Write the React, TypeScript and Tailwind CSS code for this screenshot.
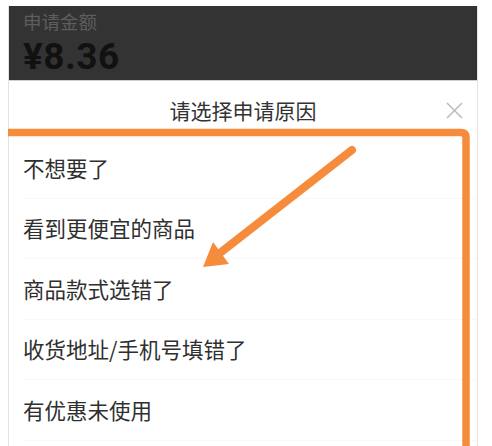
import React from "react";

const reasons = [
  "不想要了",
  "看到更便宜的商品",
  "商品款式选错了",
  "收货地址/手机号填错了",
  "有优惠未使用",
];

export default function App() {
  return (
    <div
      className="relative w-[492px] h-[446px] overflow-hidden bg-white pt-[6px] pl-[8px]"
      style={{ fontFamily: '"Noto Sans CJK SC", "Noto Sans", sans-serif' }}
    >
      <div className="w-[470px] h-[440px] border-x border-[#e3e3e3] flex flex-col">
        <div className="h-[75px] bg-[#333333] border-b border-[#cfcfcf] px-[14px] flex flex-col">
          <div className="mt-[4px] h-[22px] leading-[22px] text-[18.5px] text-[#5e5e5e]">申请金额</div>
          <div
            className="mt-[4px] h-[42px] leading-[42px] text-[37px] font-bold text-[#111111] tracking-[0.5px]"
            style={{ fontFamily: 'Roboto, "Noto Sans CJK SC", sans-serif' }}
          >
            ¥8.36
          </div>
        </div>
        <div className="h-[57px] pt-[3px] relative flex items-center justify-center text-[21px] text-[#333333]">
          <span>请选择申请原因</span>
          <svg
            className="absolute right-[14px] top-[21px]"
            width="17"
            height="17"
            viewBox="0 0 17 17"
          >
            <path d="M1 1 L16 16 M16 1 L1 16" stroke="#bdbdbd" strokeWidth="1.6" fill="none" />
          </svg>
        </div>
        {reasons.map((r, i) => (
          <div key={i} className="h-[60.5px] shrink-0 flex flex-col">
            <div className="flex-1 flex items-center pl-[14px] text-[21.5px] text-[#2f2f2f]">{r}</div>
            <div className="ml-[14px] h-px bg-[#f8f8f8]" />
          </div>
        ))}
      </div>
      <svg
        className="absolute left-0 top-0 pointer-events-none"
        width="492"
        height="446"
        viewBox="0 0 492 446"
      >
        <path
          d="M8 132.5 H461 Q466 132.5 466 137.5 V450"
          stroke="#f68c3b"
          strokeWidth="7.5"
          fill="none"
        />
        <line x1="352" y1="150" x2="218" y2="254.5" stroke="#f68c3b" strokeWidth="8" strokeLinecap="round" />
        <polygon points="203,267 229,264 213,242" fill="#f68c3b" />
      </svg>
    </div>
  );
}
